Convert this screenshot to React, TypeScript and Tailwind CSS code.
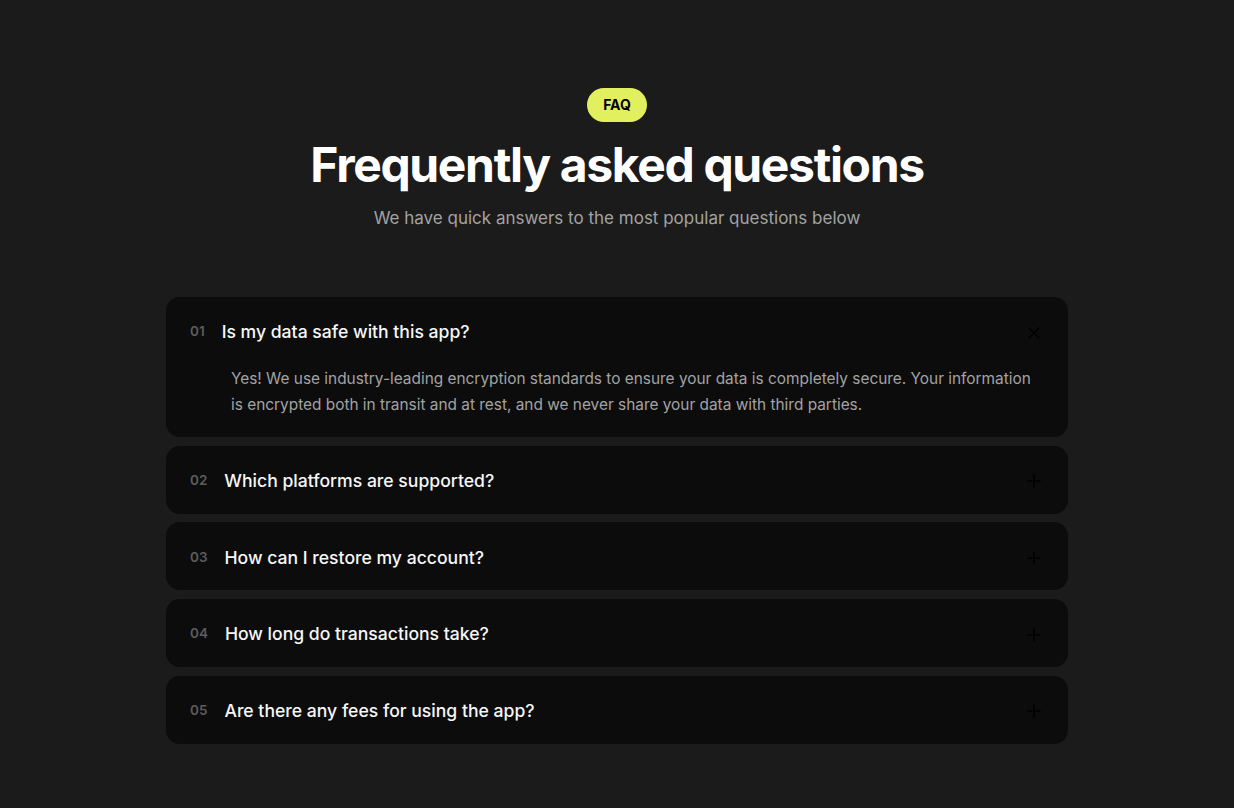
import { useState } from 'react'

const faqs = [
  {
    id: '01',
    question: 'Is my data safe with this app?',
    answer:
      'Yes! We use industry-leading encryption standards to ensure your data is completely secure. Your information is encrypted both in transit and at rest, and we never share your data with third parties.',
  },
  {
    id: '02',
    question: 'Which platforms are supported?',
    answer: 'The app is available on iOS, Android and the web, and your account syncs across all of them.',
  },
  {
    id: '03',
    question: 'How can I restore my account?',
    answer: 'Use your recovery phrase or the email linked to your account to restore access at any time.',
  },
  {
    id: '04',
    question: 'How long do transactions take?',
    answer: 'Most transactions are confirmed within a few seconds, depending on network load.',
  },
  {
    id: '05',
    question: 'Are there any fees for using the app?',
    answer: 'The app itself is free. Standard network fees may apply for some transactions.',
  },
]

export default function App() {
  const [openId, setOpenId] = useState<string | null>('01')

  return (
    <div className="min-h-[808px] bg-[#1b1b1b] pt-[88px] pb-16 font-['Inter',sans-serif]">
      <div className="flex flex-col items-center">
        <span className="rounded-full bg-[#e2f060] px-4 py-[7px] text-sm leading-5 font-bold text-black">
          FAQ
        </span>
        <h1 className="mt-[14px] text-[48px] leading-[58px] font-bold tracking-[-0.028em] text-white">
          Frequently asked questions
        </h1>
        <p className="mt-[12px] text-[17px] leading-6 text-[#a3a3a3]">
          We have quick answers to the most popular questions below
        </p>
      </div>

      <div className="mx-auto mt-[67px] flex w-[902px] flex-col gap-[8.7px]">
        {faqs.map((faq) => {
          const isOpen = openId === faq.id
          return (
            <div key={faq.id} className="rounded-[14px] bg-[#0c0c0d]">
              {/* Question row */}
              <button
                onClick={() => setOpenId(isOpen ? null : faq.id)}
                className="flex h-[68px] w-full items-center gap-[17px] px-6 pt-[3px] text-left"
              >
                <span className="mb-[2px] text-[13.5px] font-semibold text-[#5c5c5c]">{faq.id}</span>
                <span className="flex-1 text-[17.6px] font-medium text-[#f7f7f7]">{faq.question}</span>
                <svg
                  className="h-5 w-5 text-black"
                  viewBox="0 0 20 20"
                  fill="none"
                  stroke="currentColor"
                  strokeWidth={1.6}
                  strokeLinecap="round"
                >
                  {isOpen ? (
                    <path d="M5 5l10 10M15 5L5 15" />
                  ) : (
                    <path d="M10 4v12M4 10h12" />
                  )}
                </svg>
              </button>

              {/* Answer */}
              {isOpen && (
                <p className="pt-[1px] pr-6 pb-[19px] pl-[65px] text-[15.4px] leading-[26px] text-[#a3a3a3]">
                  {faq.answer}
                </p>
              )}
            </div>
          )
        })}
      </div>
    </div>
  )
}
